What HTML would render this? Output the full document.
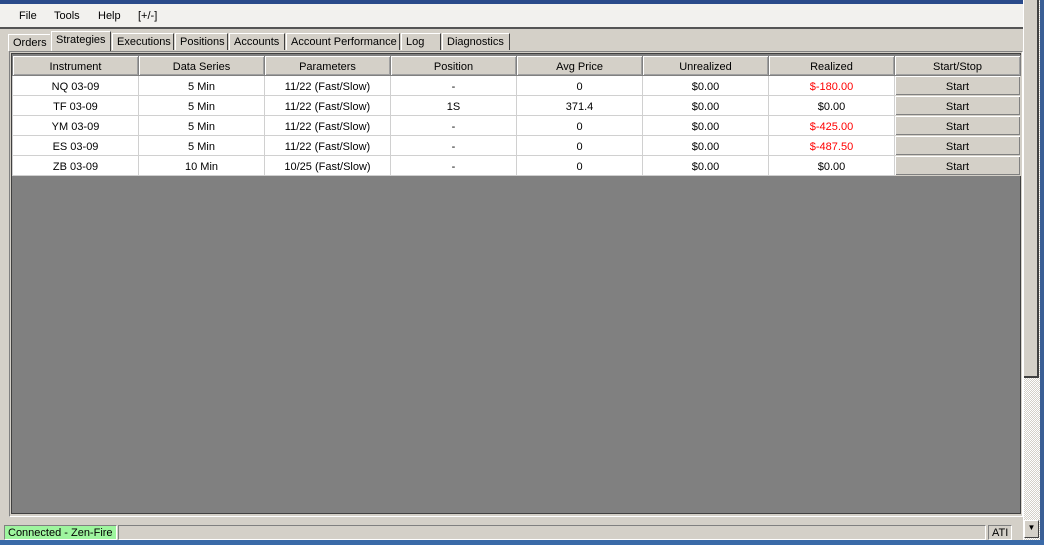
<!DOCTYPE html>
<html><head><style>
*{margin:0;padding:0;box-sizing:border-box}
body{width:1044px;height:545px;overflow:hidden;background:#d4d0c8;font-family:"Liberation Sans",sans-serif;font-size:11px;color:#000;position:relative}
.abs{position:absolute}
#top{left:0;top:0;width:1044px;height:4px;background:#2a4a8a}
#menu{left:0;top:4px;width:1023px;height:24px;background:#f2f1ee}
#menu span{position:absolute;top:6px;font-size:11px}
#mline{left:0;top:27px;width:1023px;height:2px;background:#555}
.tab{position:absolute;top:33px;height:17px;border:1px solid #fff;border-right:1px solid #404040;border-bottom:none;padding:2px 4px 0;background:#d4d0c8;white-space:nowrap}
#panel{left:9px;top:51px;width:1014px;height:466px;border:1px solid #808080;border-right-color:#fff;border-bottom-color:#fff;background:#d4d0c8}
#grid{left:11px;top:53px;width:1010px;height:461px;background:#808080;border:1px solid #404040}
table{position:absolute;left:12px;top:55px;border-collapse:collapse;table-layout:fixed}
td,th{width:126px;height:20px;text-align:center;font-weight:normal;font-size:11px;padding:2px 0 0}
th{background:#d4d0c8;border:1px solid #808080;box-shadow:inset 1px 1px #fff,inset -1px -1px #a0a0a0}
td{background:#fff;border:1px solid #d0d0d0}
td.b{background:#d4d0c8;box-shadow:inset 1px 1px #fff,inset -1px -1px #808080;border-color:#d4d0c8}
.r{color:#f00}
#sb{left:1023px;top:0;width:17px;height:540px;background:repeating-conic-gradient(#d4d0c8 0 25%,#fff 0 50%) 0 0/2px 2px;border-left:1px solid #fff}
#thumb{left:1024px;top:0;width:15px;height:378px;background:#d4d0c8;border-right:2px solid #404040;border-bottom:2px solid #404040}
#blue{left:1040px;top:0;width:4px;height:545px;background:#3a5f95}
#bot{left:0;top:540px;width:1044px;height:5px;background:#3a6aa8}
#status{left:0;top:518px;width:1023px;height:22px;background:#d4d0c8}
.st{position:absolute;top:525px;height:15px;border:1px solid #808080;border-right-color:#fff;border-bottom-color:#fff;font-size:11px;padding:1px 3px 0;line-height:13px}
</style></head><body>
<div class="abs" id="top"></div>
<div class="abs" id="menu"><span style="left:19px">File</span><span style="left:54px">Tools</span><span style="left:98px">Help</span><span style="left:138px">[+/-]</span></div>
<div class="abs" id="mline"></div>
<div class="tab" style="left:8px;top:34px;width:42px;border-right:none">Orders</div>
<div class="tab" style="left:51px;top:31px;height:20px;width:60px">Strategies</div>
<div class="tab" style="left:112px;width:62px">Executions</div>
<div class="tab" style="left:175px;width:53px">Positions</div>
<div class="tab" style="left:229px;width:56px">Accounts</div>
<div class="tab" style="left:286px;width:114px">Account Performance</div>
<div class="tab" style="left:401px;width:40px">Log</div>
<div class="tab" style="left:442px;width:68px">Diagnostics</div>
<div class="abs" id="panel"></div>
<div class="abs" id="grid"></div>
<table>
<tr><th>Instrument</th><th>Data Series</th><th>Parameters</th><th>Position</th><th>Avg Price</th><th>Unrealized</th><th>Realized</th><th>Start/Stop</th></tr>
<tr><td>NQ 03-09</td><td>5 Min</td><td>11/22 (Fast/Slow)</td><td>-</td><td>0</td><td>$0.00</td><td class="r">$-180.00</td><td class="b">Start</td></tr>
<tr><td>TF 03-09</td><td>5 Min</td><td>11/22 (Fast/Slow)</td><td>1S</td><td>371.4</td><td>$0.00</td><td>$0.00</td><td class="b">Start</td></tr>
<tr><td>YM 03-09</td><td>5 Min</td><td>11/22 (Fast/Slow)</td><td>-</td><td>0</td><td>$0.00</td><td class="r">$-425.00</td><td class="b">Start</td></tr>
<tr><td>ES 03-09</td><td>5 Min</td><td>11/22 (Fast/Slow)</td><td>-</td><td>0</td><td>$0.00</td><td class="r">$-487.50</td><td class="b">Start</td></tr>
<tr><td>ZB 03-09</td><td>10 Min</td><td>10/25 (Fast/Slow)</td><td>-</td><td>0</td><td>$0.00</td><td>$0.00</td><td class="b">Start</td></tr>
</table>
<div class="abs" id="sb"></div>
<div class="abs" id="thumb"></div>
<div class="abs" id="status"></div>
<div class="st" style="left:4px;width:113px;background:#9ef59e">Connected - Zen-Fire</div>
<div class="st" style="left:118px;width:868px"></div>
<div class="st" style="left:988px;width:24px">ATI</div>
<div class="abs" style="left:1024px;top:520px;width:15px;height:18px;background:#d4d0c8;border:1px solid #fff;border-right-color:#404040;border-bottom-color:#404040;font-size:8px;text-align:center;line-height:14px">▼</div>
<div class="abs" id="blue"></div>
<div class="abs" id="bot"></div>
</body></html>
